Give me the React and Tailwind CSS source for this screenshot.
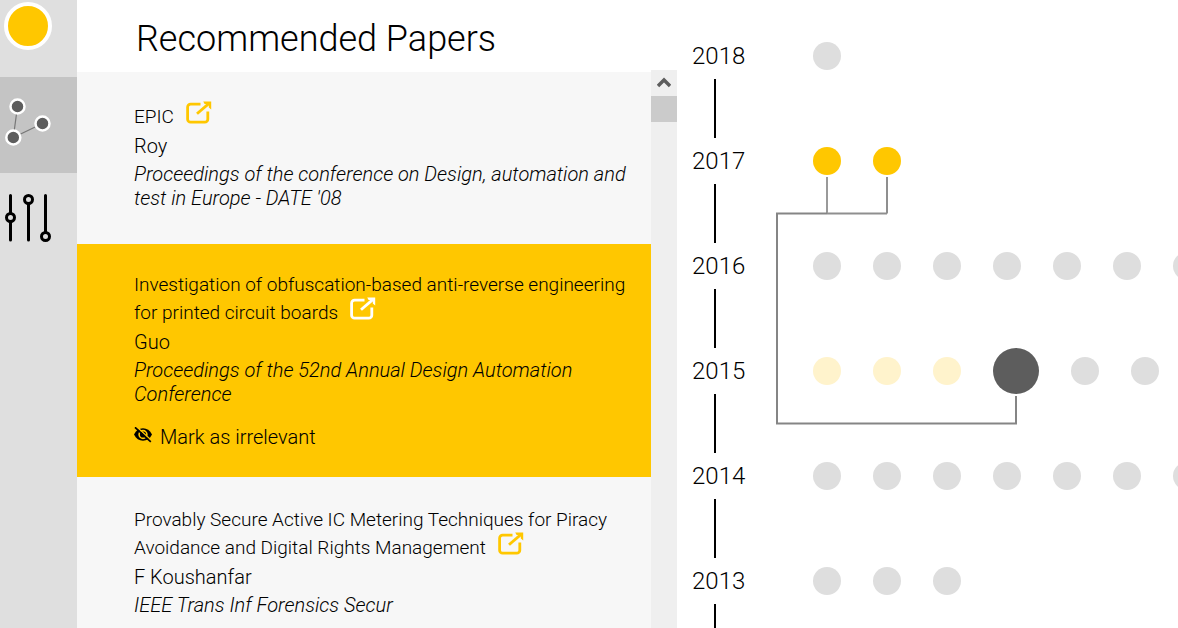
const papers = [
  {
    title: "EPIC",
    author: "Roy",
    venue: "Proceedings of the conference on Design, automation and test in Europe - DATE '08",
  },
  {
    title: "Investigation of obfuscation-based anti-reverse engineering for printed circuit boards",
    author: "Guo",
    venue: "Proceedings of the 52nd Annual Design Automation Conference",
    selected: true,
  },
  {
    title: "Provably Secure Active IC Metering Techniques for Piracy Avoidance and Digital Rights Management",
    author: "F Koushanfar",
    venue: "IEEE Trans Inf Forensics Secur",
  },
];

const years = [
  { year: 2018, dots: ["grey"] },
  { year: 2017, dots: ["gold", "gold"] },
  { year: 2016, dots: ["grey", "grey", "grey", "grey", "grey", "grey", "grey"] },
  { year: 2015, dots: ["pale", "pale", "pale", "focus", "grey", "grey"] },
  { year: 2014, dots: ["grey", "grey", "grey", "grey", "grey", "grey", "grey"] },
  { year: 2013, dots: ["grey", "grey", "grey"] },
];

const dotStyles = {
  grey: "size-7 bg-[#dedede]",
  gold: "size-7 bg-[#ffc700]",
  pale: "size-7 bg-[#fff3cc]",
  focus: "size-[46px] bg-[#5d5d5d]",
};

function ExternalLinkIcon() {
  return (
    <svg width="26" height="24" viewBox="0 0 26 24" fill="none" stroke="currentColor" strokeWidth="2.8" aria-hidden="true">
      <path d="M14.5 3.2H4.6a3 3 0 0 0-3 3v12a3 3 0 0 0 3 3h14.2a3 3 0 0 0 3-3V10.5" />
      <path d="M11 12.8 22.8 2.6" />
      <path d="M17.2 0.5H25.2V8.5L22.8 6.5V2.9H18.6Z" fill="currentColor" stroke="none" />
    </svg>
  );
}

function EyeOffIcon() {
  return (
    <svg width="18" height="16" viewBox="0 0 18 16" fill="none" aria-hidden="true">
      <path d="M0 7.5C2 3.3 5.2 1.3 9 1.3S16 3.3 18 7.5c-2 4.2-5.2 6.2-9 6.2S2 11.7 0 7.5Z" fill="#000" />
      <circle cx="9" cy="7.5" r="3.9" stroke="#ffc700" strokeWidth="1.6" />
      <path d="M2.2 -0.5 18 14" stroke="#ffc700" strokeWidth="1.6" />
      <path d="M1 .3 16.8 14.8" stroke="#000" strokeWidth="1.7" />
    </svg>
  );
}

function NetworkIcon() {
  return (
    <svg width="50" height="50" viewBox="0 0 50 50" aria-hidden="true">
      <path d="M15.5 9.5 11.3 40.5 40.5 26.5" fill="none" stroke="#777" strokeWidth="1.2" />
      <g fill="#5d5d5d" stroke="#fff" strokeWidth="2.5">
        <circle cx="15.5" cy="9.5" r="7" />
        <circle cx="40.5" cy="26.5" r="7" />
        <circle cx="11.3" cy="40.5" r="7" />
      </g>
    </svg>
  );
}

function SlidersIcon() {
  return (
    <svg width="48" height="50" viewBox="0 0 48 50" stroke="#000" strokeWidth="3" strokeLinecap="round" fill="#dfdfdf" aria-hidden="true">
      <path d="M6.5 2.5V47M24.5 6V47M41.5 2.5V43" />
      <circle cx="6.5" cy="24.5" r="4" />
      <circle cx="24.5" cy="6.5" r="4" />
      <circle cx="41.5" cy="43.5" r="4" />
    </svg>
  );
}

function Sidebar() {
  return (
    <nav className="flex w-[77px] shrink-0 flex-col bg-[#dfdfdf]">
      <button aria-label="Home" className="flex h-[77px] items-start p-1 pt-0.5">
        <span className="size-12 rounded-full border-4 border-white bg-[#ffc700]" />
      </button>
      <button aria-label="Network" className="flex h-24 items-center bg-[#c4c4c4] pb-1.5 pl-0.5">
        <NetworkIcon />
      </button>
      <button aria-label="Filters" className="flex h-[90px] items-center pl-1">
        <SlidersIcon />
      </button>
    </nav>
  );
}

function Paper({ paper }) {
  return (
    <article className={paper.selected ? "bg-[#ffc700] pt-[27px] pr-2 pb-[26px] pl-[57px]" : "pt-[29px] pr-2 pb-[34px] pl-[57px]"}>
      <h2 className="text-[19px] leading-7">
        {paper.title}
        <a
          href="#paper"
          aria-label="Open paper"
          className={paper.selected ? "-mt-2 -mb-0.5 ml-3 inline-block text-white" : "-mt-2 -mb-0.5 ml-3 inline-block text-[#ffc700]"}
        >
          <ExternalLinkIcon />
        </a>
      </h2>
      <p className="mt-px leading-7">{paper.author}</p>
      <p className="mt-0.5 leading-6 italic">{paper.venue}</p>
      {paper.selected && (
        <button className="mt-[17px] flex items-center gap-2 leading-7">
          <span className="pb-1">
            <EyeOffIcon />
          </span>
          Mark as irrelevant
        </button>
      )}
    </article>
  );
}

function Scrollbar() {
  return (
    <div className="-mt-0.5 flex w-[26px] shrink-0 flex-col bg-[#efefef]">
      <button aria-label="Scroll up" className="flex size-[26px] items-center justify-center">
        <svg width="14" height="12" viewBox="0 0 14 12" fill="none" stroke="#5d5d5d" strokeWidth="3.4" aria-hidden="true">
          <path d="M1 9 7 3 13 9" />
        </svg>
      </button>
      <div className="h-[26px] bg-[#cbcbcb]" />
    </div>
  );
}

function Timeline() {
  return (
    <main className="relative min-w-0 flex-1 overflow-hidden pt-[33px] pl-3">
      {years.map(({ year, dots }) => (
        <section key={year} className="flex h-[105px] gap-16">
          <div className="flex w-[60px] shrink-0 flex-col">
            <h2 className="flex h-[46px] items-center pl-[3px] text-2xl">{year}</h2>
            <div className="ml-[25px] w-0.5 flex-1 bg-black" />
          </div>
          <div className="flex h-[46px] items-center gap-8">
            {dots.map((kind, i) => (
              <button key={i} aria-label={`Paper ${i + 1} from ${year}`} className={`shrink-0 rounded-full ${dotStyles[kind]}`} />
            ))}
          </div>
        </section>
      ))}
      <svg className="pointer-events-none absolute top-0 left-0" width="400" height="440" viewBox="0 0 400 440" fill="none" strokeWidth="2" aria-hidden="true">
        <path d="M210 177V213.5M150 213.5H210" stroke="#8f8f8f" />
        <path d="M150 177V213" stroke="#9a9a9a" />
        <path d="M150 213.5H100V423.5H339V396" stroke="#858585" />
      </svg>
    </main>
  );
}

export default function App() {
  return (
    <div className="flex h-screen overflow-hidden bg-white font-[Roboto,sans-serif] text-xl font-light text-black">
      <Sidebar />
      <div className="flex w-[600px] shrink-0 flex-col">
        <h1 className="flex h-[72px] shrink-0 items-center pt-1.5 pl-[59px] text-4xl">Recommended Papers</h1>
        <div className="flex min-h-0 flex-1">
          <div className="min-w-0 flex-1 overflow-hidden bg-[#f7f7f7] pt-0.5">
            {papers.map((paper) => (
              <Paper key={paper.title} paper={paper} />
            ))}
          </div>
          <Scrollbar />
        </div>
      </div>
      <Timeline />
    </div>
  );
}
